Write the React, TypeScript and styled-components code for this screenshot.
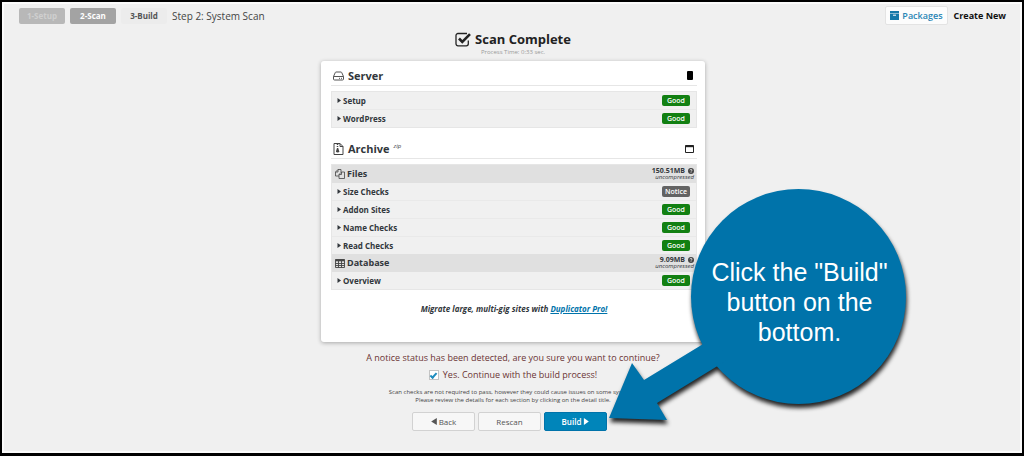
import React, { useState } from "react";
import styled, { createGlobalStyle } from "styled-components";

const GlobalStyle = createGlobalStyle`
  *, *::before, *::after { box-sizing: border-box; }
  body {
    margin: 0;
    background: #f0f0f0;
    color: #32373c;
    font-family: "Open Sans", "Noto Sans", sans-serif;
    font-size: 9px;
  }
  button, input { font-family: inherit; margin: 0; }
  h1, h2, h3, p { margin: 0; }
`;

const Frame = styled.div`
  min-height: 100vh;
  border: 2px solid #000;
  border-bottom-width: 3px;
  box-shadow: inset 0 0 0 2px #fbfbfb;
  overflow: hidden;
`;

const TopBar = styled.header`
  display: flex;
  align-items: center;
  justify-content: space-between;
  padding: 3px 16px 0 17px;
  height: 24px;
`;

const Steps = styled.nav`
  display: flex;
  align-items: center;
  gap: 5px;
`;

const Step = styled.span<{ $state: "done" | "current" | "next" }>`
  height: 16px;
  min-width: 46px;
  line-height: 16px;
  border-radius: 2px;
  text-align: center;
  font-size: 8px;
  font-weight: 700;
  color: ${(p) => (p.$state === "next" ? "#555" : p.$state === "current" ? "#fff" : "#cfcfcf")};
  background: ${(p) => (p.$state === "next" ? "#ececec" : p.$state === "current" ? "#a3a3a3" : "#b8b8b8")};
`;

const StepTitle = styled.span`
  font-size: 10px;
  line-height: 14px;
  color: #444;
`;

const Actions = styled.div`
  display: flex;
  align-items: center;
  gap: 6px;
`;

const PackagesLink = styled.a`
  display: flex;
  align-items: center;
  gap: 3px;
  height: 19px;
  padding: 0 4px;
  border: 1px solid #e3e3e3;
  border-radius: 2px;
  background: #fcfcfc;
  color: #2a86b5;
  font-weight: 600;
  text-decoration: none;
`;

const CreateNew = styled.a`
  color: #111;
  font-weight: 700;
  text-decoration: none;
`;

const Main = styled.main`
  position: relative;
  width: 384px;
  max-width: 100%;
  margin: 0 auto;
  left: 1px;
`;

const ScanHeader = styled.div`
  display: flex;
  flex-direction: column;
  align-items: center;
  padding-top: 4px;
  height: 35px;
`;

const ScanTitle = styled.h1`
  display: flex;
  align-items: center;
  gap: 3px;
  font-size: 13px;
  line-height: 19px;
  color: #222;
`;

const ProcessTime = styled.p`
  font-size: 6px;
  line-height: 7px;
  color: #999;
`;

const Card = styled.section`
  min-height: 281px;
  padding: 5px 8px 0 10px;
  border-radius: 3px;
  background: #fff;
  box-shadow: 0 1px 4px rgba(0, 0, 0, 0.3);
`;

const Heading = styled.div`
  display: flex;
  align-items: center;
  justify-content: space-between;
  height: 20px;
  padding: 0 3px 0 2px;
  border-bottom: 1px solid #e6e6e6;
  margin-bottom: 5px;
`;

const HeadingTitle = styled.h2`
  display: flex;
  align-items: center;
  gap: 4px;
  font-size: 11px;
  line-height: 16px;
  color: #32373c;
`;

const Format = styled.sup`
  font-size: 6px;
  font-weight: 400;
  font-style: italic;
  line-height: 6px;
  align-self: flex-start;
  padding-top: 2px;
`;

const IconButton = styled.button`
  display: flex;
  padding: 0;
  border: 0;
  background: none;
  color: #222;
`;

const Group = styled.div`
  border: 1px solid #e6e6e6;
  background: #f0f0f0;
  margin-bottom: 11px;
`;

const GroupHead = styled.div`
  display: flex;
  align-items: center;
  justify-content: space-between;
  height: 18px;
  padding: 0 2px 0 3px;
  background: #e0e0e0;
`;

const GroupTitle = styled.h3`
  display: flex;
  align-items: center;
  gap: 2px;
  font-size: 9px;
  line-height: 14px;
`;

const Size = styled.div`
  text-align: right;
  font-size: 7px;
  line-height: 7px;
  font-weight: 700;
`;

const SizeValue = styled.div`
  display: flex;
  align-items: center;
  justify-content: flex-end;
  gap: 3px;
`;

const SizeNote = styled.div`
  font-size: 6px;
  font-style: italic;
  font-weight: 400;
`;

const CheckRow = styled.button`
  display: flex;
  align-items: center;
  justify-content: space-between;
  width: 100%;
  height: 18px;
  padding: 0 6px 0 5px;
  border: 0;
  border-bottom: 1px solid #e9e9e9;
  background: none;
  color: #32373c;
  text-align: left;
  font-size: 8px;
  font-weight: 700;
  &:last-child { border-bottom: 0; height: 17px; }
`;

const RowName = styled.span`
  display: flex;
  align-items: center;
  gap: 2px;
`;

const Badge = styled.span<{ $notice?: boolean }>`
  width: 28px;
  height: 11px;
  border-radius: 2px;
  line-height: 11px;
  text-align: center;
  font-size: 7px;
  font-weight: 600;
  color: #fff;
  background: ${(p) => (p.$notice ? "#636363" : "#128012")};
`;

const Promo = styled.p`
  padding-top: 2px;
  text-align: center;
  font-size: 8px;
  line-height: 12px;
  font-weight: 700;
  font-style: italic;
  a { color: #0073aa; }
`;

const Notice = styled.div`
  display: flex;
  flex-direction: column;
  align-items: center;
  padding-top: 8px;
  font-size: 9px;
  line-height: 16px;
  color: #6b3434;
`;

const Confirm = styled.label`
  display: flex;
  align-items: center;
  gap: 4px;
  line-height: 18px;
`;

const Tick = styled.input`
  appearance: none;
  width: 10px;
  height: 10px;
  border: 1px solid #c4c4c4;
  background: #fff;
  display: grid;
  place-items: center;
  &:checked::before {
    content: "";
    width: 7px;
    height: 4px;
    border: solid #1e8cbe;
    border-width: 0 0 2px 2px;
    transform: rotate(-48deg);
  }
`;

const Hint = styled.p`
  padding-top: 4px;
  text-align: center;
  font-size: 6px;
  line-height: 8px;
  color: #444;
  white-space: nowrap;
`;

const Buttons = styled.div`
  display: flex;
  justify-content: center;
  gap: 3px;
  padding: 8px 7px 0 0;
`;

const Button = styled.button<{ $primary?: boolean }>`
  display: flex;
  align-items: center;
  justify-content: center;
  gap: 2px;
  width: 63px;
  height: 19px;
  padding: 0;
  border: 1px solid ${(p) => (p.$primary ? "#0073aa" : "#d2d2d2")};
  border-radius: 2px;
  background: ${(p) => (p.$primary ? "#0085ba" : "#f7f7f7")};
  color: ${(p) => (p.$primary ? "#fff" : "#555")};
  font-size: 8px;
  font-weight: ${(p) => (p.$primary ? 600 : 400)};
`;

/* Annotation that floats over the page and points at the Build button. */
const Callout = styled.aside`
  position: absolute;
  left: 282px;
  top: 158px;
  width: 310px;
  height: 250px;
  pointer-events: none;
  svg { position: absolute; inset: 0; overflow: visible; filter: drop-shadow(1px 4px 2px rgba(0, 0, 0, 0.85)); }
`;

const CalloutText = styled.p`
  position: absolute;
  left: 88px;
  top: 5px;
  width: 217px;
  height: 214px;
  display: flex;
  align-items: center;
  justify-content: center;
  padding: 12px 16px 0;
  text-align: center;
  font-family: "Liberation Sans", Arial, sans-serif;
  font-size: 25px;
  line-height: 30px;
  color: #fff;
`;

const TickBoxIcon = () => (
  <svg width="17" height="15" viewBox="0 0 17 15" fill="none" stroke="#222">
    <path d="M13.3 8.5v3.3a2 2 0 0 1-2 2H3a2 2 0 0 1-2-2V3.500a2 2 0 0 1 2-2h9" strokeWidth="1.3" />
    <path d="M4 6.500l3.300 3.500 7.700-7.800" strokeWidth="2.600" />
  </svg>
);

const DriveIcon = () => (
  <svg width="11" height="10" viewBox="0 0 11 10" fill="none" stroke="#555" strokeWidth="1">
    <path d="M.5 5.500 2.300 1.500Q2.500 1 3 1h5q.5 0 .7.500L10.500 5.500V8q0 1-1 1h-8q-1 0-1-1zM.5 5.500h10" />
    <path d="M6 7.300h1M8 7.300h1" />
  </svg>
);

const ZipIcon = () => (
  <svg width="11" height="12" viewBox="0 0 11 12" fill="none" stroke="#444" strokeWidth="1">
    <path d="M1 .5h6l3 3v8H1zM7 .5v3h3" />
    <path d="M4.500 1v4" strokeDasharray="1 1" strokeWidth="1.500" />
    <path d="M4 5h1.200l1 3.300q0 1.200-1.500 1.200T3 8.300z" fill="#444" stroke="none" />
  </svg>
);

const FilesIcon = () => (
  <svg width="10" height="10" viewBox="0 0 10 10" fill="none" stroke="#444" strokeWidth=".8">
    <path d="M4 7H.5V3L3 .5h3V3M3 .5V3H.5M4 5.500 6.500 3h3v6.500H4zM6.500 3v2.500H4" />
  </svg>
);

const TableIcon = () => (
  <svg width="10" height="9" viewBox="0 0 10 9" fill="none" stroke="#444" strokeWidth=".9">
    <path d="M.5.5h9v8h-9zM.5 4.500h9M.5 6.500h9M3.500 2v6.500M6.500 2v6.500" />
    <path d="M.5 1.300h9" strokeWidth="2" />
  </svg>
);

const ArchiveIcon = () => (
  <svg width="9" height="9" viewBox="0 0 9 9" fill="#1478a8">
    <path d="M0 0h9v2.500H0zM0 3h9v6H0z" />
    <path d="M3 4.200h3" stroke="#fff" />
  </svg>
);

const WindowIcon = () => (
  <svg width="9" height="8" viewBox="0 0 9 8" fill="none" stroke="currentColor">
    <path d="M.5.5h8v7h-8z" />
    <path d="M.5 1.300h8" strokeWidth="1.800" />
  </svg>
);

const DeviceIcon = () => (
  <svg width="8" height="9" viewBox="0 0 8 9" fill="#000">
    <rect x="1" y="0" width="6" height="9" rx="1" />
  </svg>
);

const HelpIcon = () => (
  <svg width="6" height="6" viewBox="0 0 6 6">
    <circle cx="3" cy="3" r="3" fill="#444" />
    <path d="M2 2.300q0-.9 1-.9t1 .8-1 1v.4M3 4.300v.7" stroke="#fff" strokeWidth=".7" fill="none" />
  </svg>
);

const Triangle = ({ size = 4, back = false }: { size?: number; back?: boolean }) => (
  <svg width={size} height={size + 1} viewBox="0 0 4 5" fill="currentColor">
    <path d={back ? "M4 0v5L0 2.500z" : "M.5 0v5L4 2.500z"} />
  </svg>
);

type Check = { name: string; notice?: boolean };

const Checks = ({ items }: { items: Check[] }) => (
  <>
    {items.map((c) => (
      <CheckRow key={c.name} type="button">
        <RowName>
          <Triangle />
          {c.name}
        </RowName>
        <Badge $notice={c.notice}>{c.notice ? "Notice" : "Good"}</Badge>
      </CheckRow>
    ))}
  </>
);

const SizeInfo = ({ value }: { value: string }) => (
  <Size>
    <SizeValue>
      {value}
      <HelpIcon />
    </SizeValue>
    <SizeNote>uncompressed</SizeNote>
  </Size>
);

export default function App() {
  const [confirmed, setConfirmed] = useState(true);
  return (
    <>
      <GlobalStyle />
      <Frame>
        <TopBar>
          <Steps>
            <Step $state="done">1-Setup</Step>
            <Step $state="current">2-Scan</Step>
            <Step $state="next">3-Build</Step>
            <StepTitle>Step 2: System Scan</StepTitle>
          </Steps>
          <Actions>
            <PackagesLink href="#packages">
              <ArchiveIcon />
              Packages
            </PackagesLink>
            <CreateNew href="#new">Create New</CreateNew>
          </Actions>
        </TopBar>
        <Main>
          <ScanHeader>
            <ScanTitle>
              <TickBoxIcon />
              Scan Complete
            </ScanTitle>
            <ProcessTime>Process Time: 0:33 sec.</ProcessTime>
          </ScanHeader>
          <Card>
            <Heading>
              <HeadingTitle>
                <DriveIcon />
                Server
              </HeadingTitle>
              <IconButton type="button" aria-label="Server details">
                <DeviceIcon />
              </IconButton>
            </Heading>
            <Group>
              <Checks items={[{ name: "Setup" }, { name: "WordPress" }]} />
            </Group>
            <Heading>
              <HeadingTitle>
                <ZipIcon />
                Archive
                <Format>zip</Format>
              </HeadingTitle>
              <IconButton type="button" aria-label="Archive details">
                <WindowIcon />
              </IconButton>
            </Heading>
            <Group>
              <GroupHead>
                <GroupTitle>
                  <FilesIcon />
                  Files
                </GroupTitle>
                <SizeInfo value="150.51MB" />
              </GroupHead>
              <div>
                <Checks
                  items={[
                    { name: "Size Checks", notice: true },
                    { name: "Addon Sites" },
                    { name: "Name Checks" },
                    { name: "Read Checks" },
                  ]}
                />
              </div>
              <GroupHead>
                <GroupTitle>
                  <TableIcon />
                  Database
                </GroupTitle>
                <SizeInfo value="9.09MB" />
              </GroupHead>
              <Checks items={[{ name: "Overview" }]} />
            </Group>
            <Promo>
              Migrate large, multi-gig sites with <a href="#pro">Duplicator Pro!</a>
            </Promo>
          </Card>
          <Notice>
            <p>A notice status has been detected, are you sure you want to continue?</p>
            <Confirm>
              <Tick
                type="checkbox"
                checked={confirmed}
                onChange={(e) => setConfirmed(e.target.checked)}
              />
              Yes. Continue with the build process!
            </Confirm>
          </Notice>
          <Hint>
            Scan checks are not required to pass, however they could cause issues on some systems.
            <br />
            Please review the details for each section by clicking on the detail title.
          </Hint>
          <Buttons>
            <Button type="button">
              <Triangle size={6} back />
              Back
            </Button>
            <Button type="button">Rescan</Button>
            <Button type="button" $primary>
              Build
              <Triangle size={6} />
            </Button>
          </Buttons>
          <Callout>
            <svg width="310" height="250" viewBox="0 0 310 250" fill="#0073aa">
              <circle cx="195.500" cy="112.500" r="107.500" />
              <path d="M6 234 29 179 41 196 110 154 126 175 54 219 64 236z" />
            </svg>
            <CalloutText>Click the "Build" button on the bottom.</CalloutText>
          </Callout>
        </Main>
      </Frame>
    </>
  );
}
